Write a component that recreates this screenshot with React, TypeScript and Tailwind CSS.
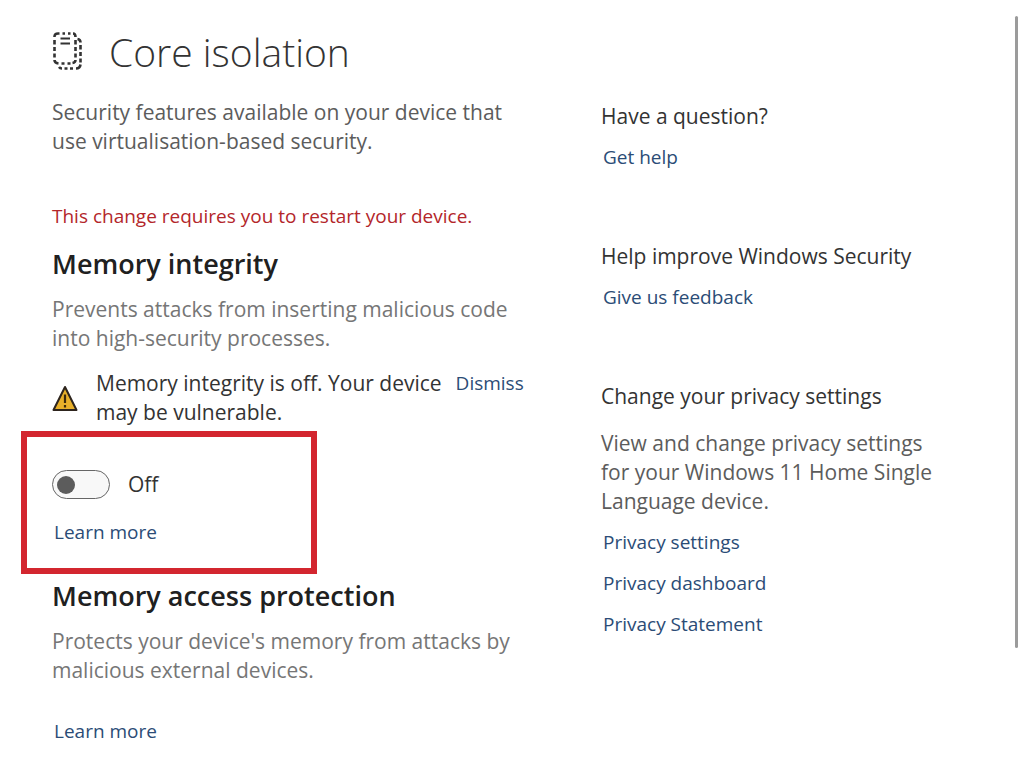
import { useState } from "react";
import type { ReactNode } from "react";

const PRIVACY_LINKS = [
  "Privacy settings",
  "Privacy dashboard",
  "Privacy Statement",
];

function TextLink({ children }: { children: ReactNode }) {
  return (
    <a href="#" className="block w-fit pl-0.5 text-[19px] leading-[29px] text-[#2b4c76] hover:underline">
      {children}
    </a>
  );
}

function ChipIcon() {
  return (
    <svg className="h-10 w-8 shrink-0" viewBox="0 1 32 40" fill="none" stroke="#333333" strokeWidth="2.6">
      <path d="M2.5 6V5.5Q2.5 2.5 6 2.5H7.5M10.5 2.5H13M16 2.5H18.5M21 2.5Q23.5 2.5 23.5 6" />
      <path d="M2.5 9V13.5M2.5 16V20M2.5 22.5V26.5M23.5 9V13.5M23.5 16V20M23.5 22.5V26.5" />
      <path d="M2.5 29Q2.5 32 6.5 32.5M9.5 32.5H12.5M15.5 32.5H18.5M20.5 32Q23.5 31.5 23.5 29" />
      <path d="M25.5 8Q28.5 8.5 28.5 11.5M28.5 14V18.5M28.5 21V25M28.5 27.5V31.5M28.5 33.5Q28 37.5 24 37.5M21 37.5H18M15.5 37.5H12.5M10 37.5Q8 37.5 7 36" />
      <path d="M8.5 7.5H18M8.5 12.5H18" strokeWidth="2.2" />
    </svg>
  );
}

function WarningIcon() {
  return (
    <svg className="mt-4 h-7 w-[26px] shrink-0" viewBox="0 0 26 28" aria-label="Warning">
      <path d="M13 2L24.5 25H1.5Z" fill="#e8b02a" stroke="#2d241d" strokeWidth="2" strokeLinejoin="round" />
      <path d="M13 9.500V18M13 20V22.500" stroke="#3d2a0c" strokeWidth="2.2" />
    </svg>
  );
}

export default function App() {
  const [enabled, setEnabled] = useState(false);

  return (
    <div className="flex min-h-screen items-start bg-white pl-[52px] pr-1.5 font-['Open_Sans',sans-serif] text-[21px] leading-[29px] text-[#333333]">
      <main className="w-[549px] shrink-0 pt-7">
        <div className="flex items-center gap-[25px]">
          <ChipIcon />
          <h1 className="text-[39px] font-light leading-[48px]">Core isolation</h1>
        </div>
        <p className="mt-[22px] text-[#5c5c5c]">
          Security features available on your device that
          <br />
          use virtualisation-based security.
        </p>

        <p className="mt-[46px] text-[19px] text-[#b3262a]">This change requires you to restart your device.</p>

        <section>
          <h2 className="mt-[17px] text-[27px] font-semibold leading-8 text-[#202020]">Memory integrity</h2>
          <p className="mt-[15px] text-[#767676]">
            Prevents attacks from inserting malicious code
            <br />
            into high-security processes.
          </p>
          <div className="mt-4 flex items-start">
            <WarningIcon />
            <p className="ml-[18px]">
              Memory integrity is off. Your device
              <br />
              may be vulnerable.
            </p>
            <button type="button" className="ml-[14px] text-[19px] text-[#2b4c76] hover:underline">
              Dismiss
            </button>
          </div>

          <div className="-ml-[31px] mt-1 w-[296px] border-[6px] border-[#d3262f] pb-[21px] pl-[25px] pt-[33px]">
            <label className="flex items-center gap-[18px]">
              <input
                type="checkbox"
                role="switch"
                checked={enabled}
                onChange={(e) => setEnabled(e.target.checked)}
                className="flex h-[29px] w-[58px] appearance-none items-center rounded-full border border-[#666666] bg-[#f8f8f8] px-1 before:h-[18px] before:w-[18px] before:rounded-full before:bg-[#5c5c5c] checked:justify-end"
              />
              <span>{enabled ? "On" : "Off"}</span>
            </label>
            <div className="mt-[19px]">
              <TextLink>Learn more</TextLink>
            </div>
          </div>
        </section>

        <section>
          <h2 className="mt-[6px] text-[27px] font-semibold leading-8 text-[#202020]">Memory access protection</h2>
          <p className="mb-8 mt-[15px] text-[#767676]">
            Protects your device's memory from attacks by
            <br />
            malicious external devices.
          </p>
          <TextLink>Learn more</TextLink>
        </section>
      </main>

      <aside className="min-w-0 flex-1 pt-[102px]">
        <section className="space-y-3">
          <h3>Have a question?</h3>
          <TextLink>Get help</TextLink>
        </section>
        <section className="mt-[70px] space-y-3">
          <h3>Help improve Windows Security</h3>
          <TextLink>Give us feedback</TextLink>
        </section>
        <section className="mt-[70px] space-y-3">
          <h3 className="mb-[18px]">Change your privacy settings</h3>
          <p className="text-[#5c5c5c]">
            View and change privacy settings
            <br />
            for your Windows 11 Home Single
            <br />
            Language device.
          </p>
          {PRIVACY_LINKS.map((link) => (
            <TextLink key={link}>{link}</TextLink>
          ))}
        </section>
      </aside>

      {/* scroll thumb */}
      <div className="mt-4 h-[632px] w-[3px] shrink-0 rounded-full bg-[#9b9b9b]" />
    </div>
  );
}
